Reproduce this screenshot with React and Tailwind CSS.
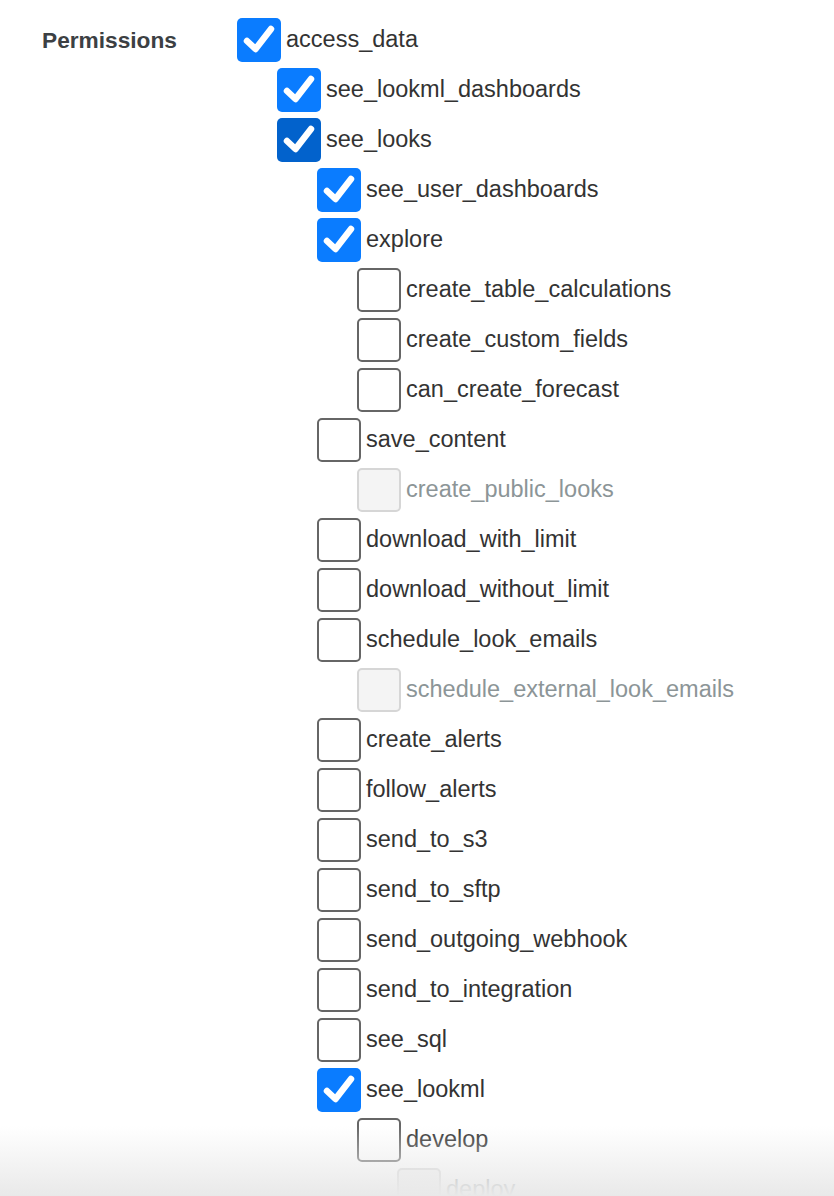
import React from "react";

const perms = [
  { name: "access_data", level: 0, state: "checked" },
  { name: "see_lookml_dashboards", level: 1, state: "checked" },
  { name: "see_looks", level: 1, state: "focused" },
  { name: "see_user_dashboards", level: 2, state: "checked" },
  { name: "explore", level: 2, state: "checked" },
  { name: "create_table_calculations", level: 3, state: "off" },
  { name: "create_custom_fields", level: 3, state: "off" },
  { name: "can_create_forecast", level: 3, state: "off" },
  { name: "save_content", level: 2, state: "off" },
  { name: "create_public_looks", level: 3, state: "disabled" },
  { name: "download_with_limit", level: 2, state: "off" },
  { name: "download_without_limit", level: 2, state: "off" },
  { name: "schedule_look_emails", level: 2, state: "off" },
  { name: "schedule_external_look_emails", level: 3, state: "disabled" },
  { name: "create_alerts", level: 2, state: "off" },
  { name: "follow_alerts", level: 2, state: "off" },
  { name: "send_to_s3", level: 2, state: "off" },
  { name: "send_to_sftp", level: 2, state: "off" },
  { name: "send_outgoing_webhook", level: 2, state: "off" },
  { name: "send_to_integration", level: 2, state: "off" },
  { name: "see_sql", level: 2, state: "off" },
  { name: "see_lookml", level: 2, state: "checked" },
  { name: "develop", level: 3, state: "off" },
  { name: "deploy", level: 4, state: "disabled" },
];

const indents = ["pl-0", "pl-[40px]", "pl-[80px]", "pl-[120px]", "pl-[160px]"];

function Box({ state }) {
  if (state === "checked" || state === "focused") {
    return (
      <span
        className={`flex h-[44px] w-[44px] shrink-0 items-center justify-center rounded-[5px] ${
          state === "focused" ? "bg-[#0262cc]" : "bg-[#0a7cff]"
        }`}
      >
        <svg width="44" height="44" viewBox="0 0 44 44">
          <path
            d="M10 23 L18.5 31 L34 11"
            fill="none"
            stroke="white"
            strokeWidth="6.5"
            strokeLinecap="round"
            strokeLinejoin="round"
          />
        </svg>
      </span>
    );
  }
  if (state === "disabled") {
    return (
      <span className="block h-[44px] w-[44px] shrink-0 rounded-[5px] border-2 border-[#d6d6d6] bg-[#f4f4f4]" />
    );
  }
  return (
    <span className="block h-[44px] w-[44px] shrink-0 rounded-[5px] border-2 border-[#666666] bg-white" />
  );
}

export default function App() {
  return (
    <div className="relative h-[1196px] overflow-hidden bg-white font-['Liberation_Sans',Arial,sans-serif]">
      <div className="flex pt-[18px]">
        <div className="w-[237px] shrink-0 pl-[42px]">
          <div className="flex h-[44px] items-center text-[22.7px] font-bold text-[#3c4043]">
            Permissions
          </div>
        </div>
        <ul className="flex flex-col gap-[6px]">
          {perms.map((p) => (
            <li key={p.name} className={`flex items-center gap-[5px] ${indents[p.level]}`}>
              <Box state={p.state} />
              <span
                className={`whitespace-nowrap text-[23.5px] leading-none ${
                  p.state === "disabled" ? "text-[#8c9597]" : "text-[#333333]"
                }`}
              >
                {p.name}
              </span>
            </li>
          ))}
        </ul>
      </div>
      <div className="pointer-events-none absolute inset-x-0 bottom-0 h-[70px] bg-linear-to-b from-white/0 to-[#e9e9e9]" />
    </div>
  );
}
